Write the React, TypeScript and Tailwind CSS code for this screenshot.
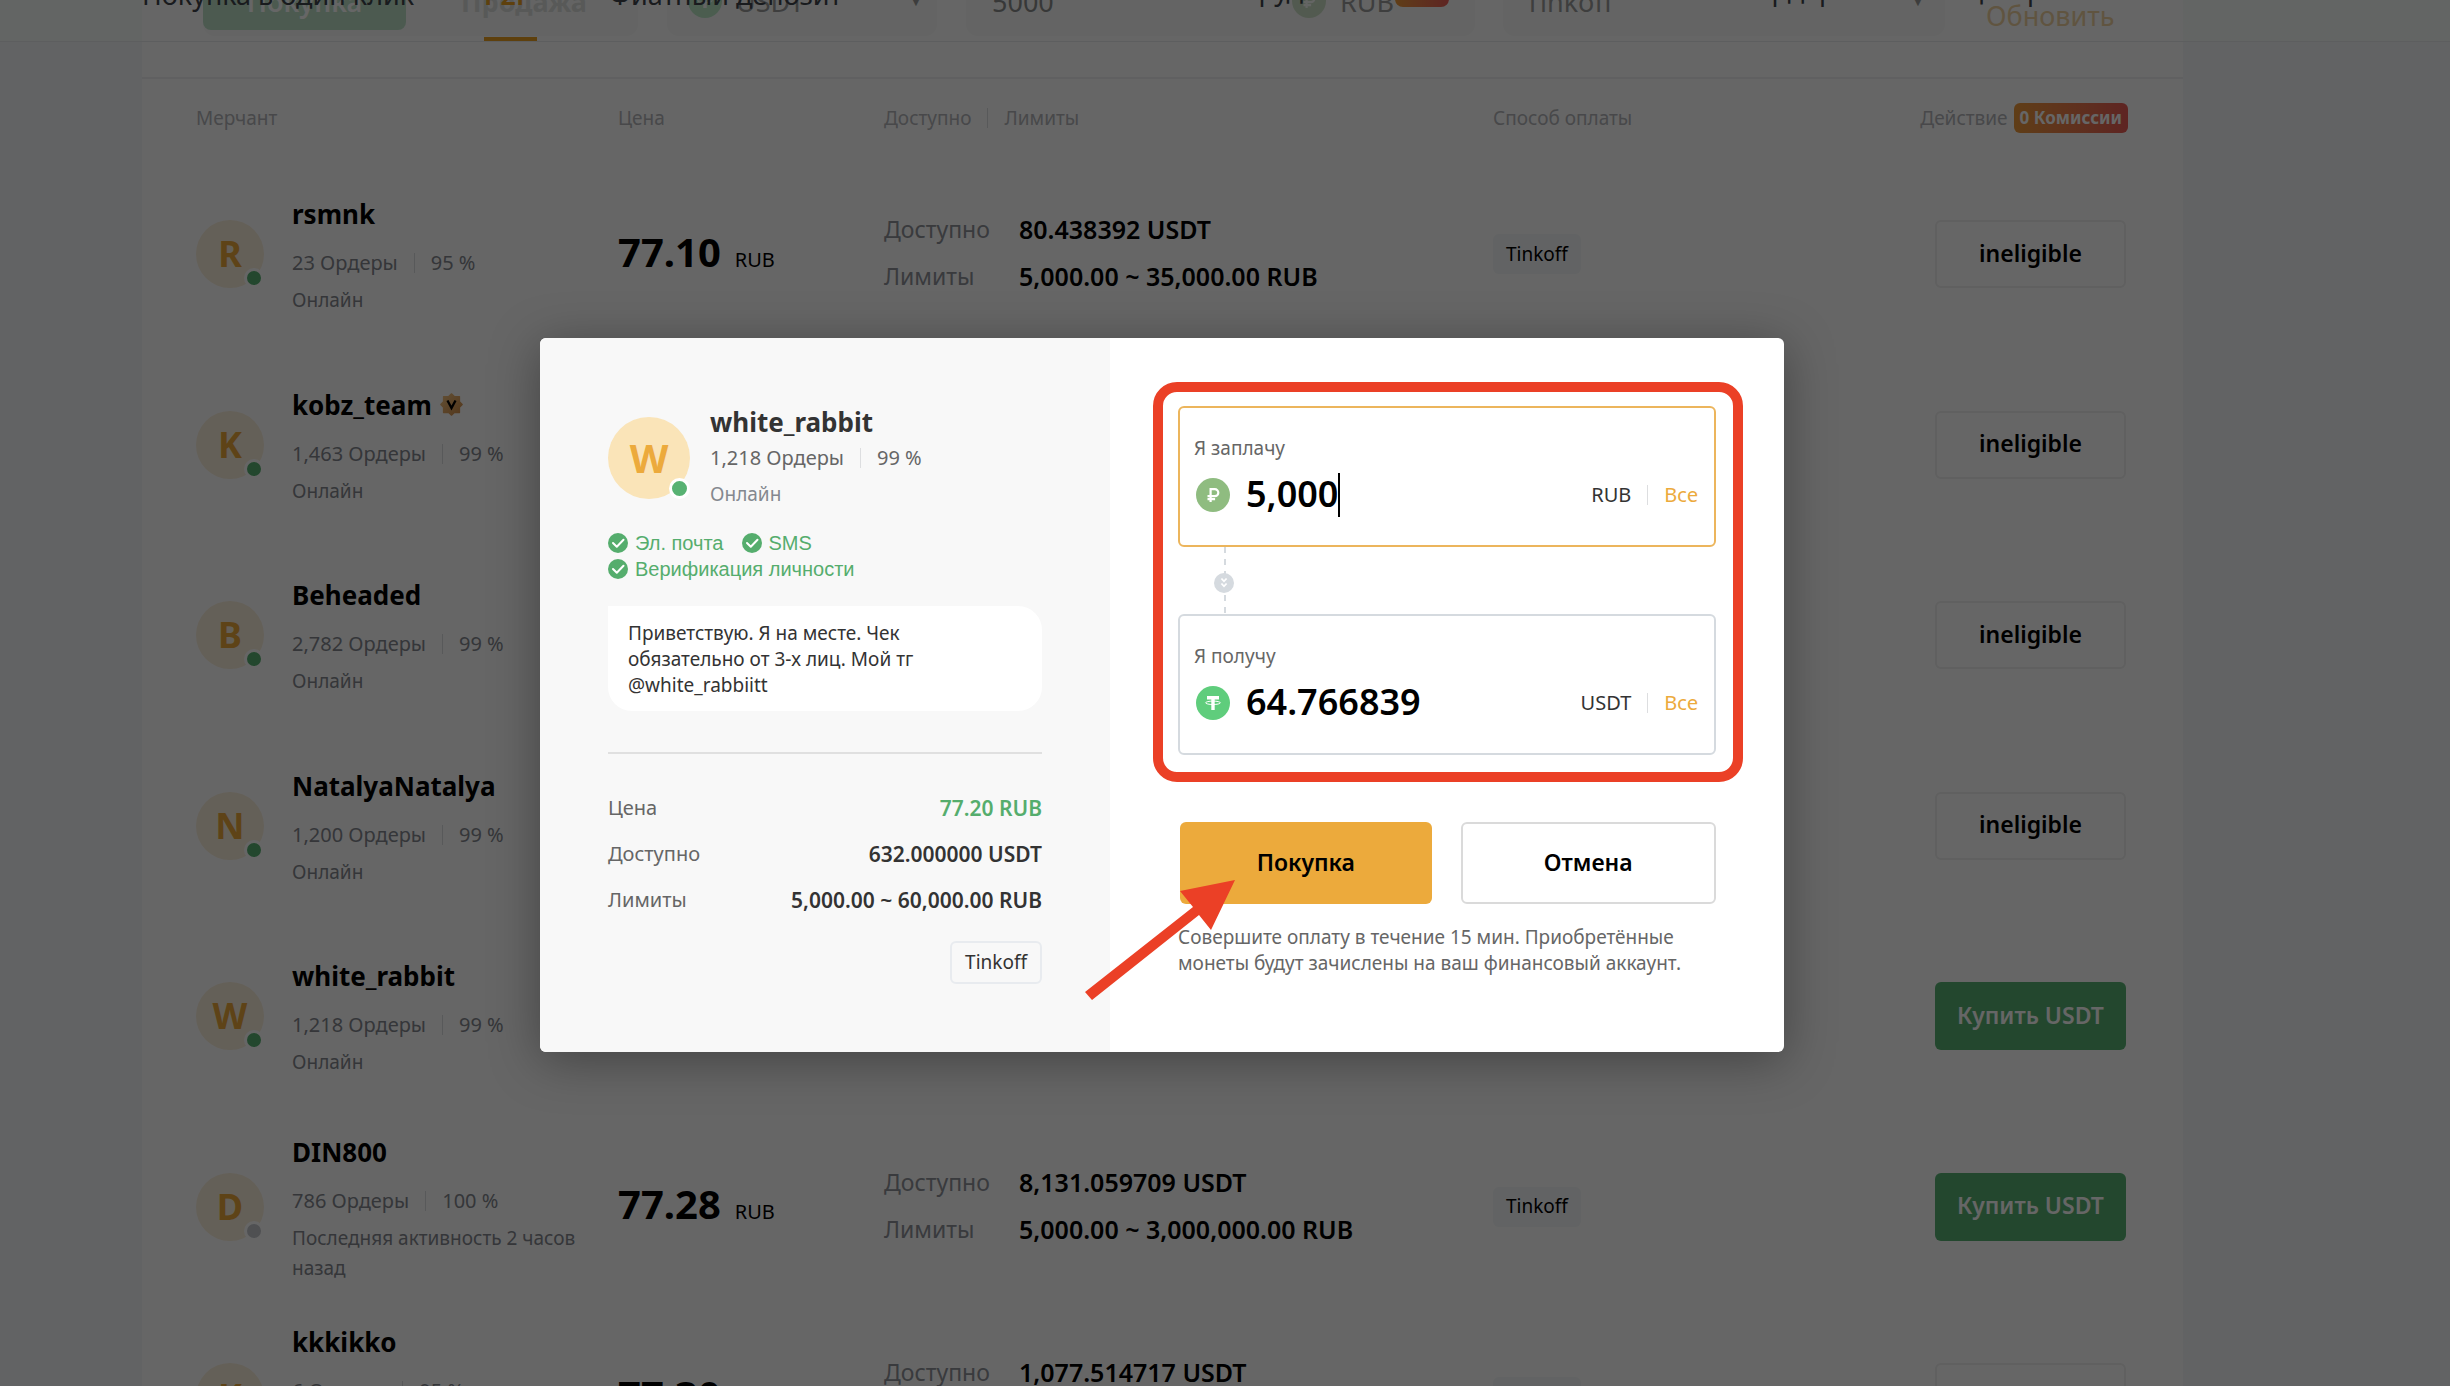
import React from "react";

type Merchant = {
  name: string;
  letter: string;
  orders: string;
  rate: string;
  status: string;
  online: boolean;
  verified?: boolean;
  price?: string;
  available?: string;
  limits?: string;
  eligible: boolean;
};

const merchants: Merchant[] = [
  { name: "rsmnk", letter: "R", orders: "23", rate: "95 %", status: "Онлайн", online: true, price: "77.10", available: "80.438392 USDT", limits: "5,000.00 ~ 35,000.00 RUB", eligible: false },
  { name: "kobz_team", letter: "K", orders: "1,463", rate: "99 %", status: "Онлайн", online: true, verified: true, eligible: false },
  { name: "Beheaded", letter: "B", orders: "2,782", rate: "99 %", status: "Онлайн", online: true, eligible: false },
  { name: "NatalyaNatalya", letter: "N", orders: "1,200", rate: "99 %", status: "Онлайн", online: true, eligible: false },
  { name: "white_rabbit", letter: "W", orders: "1,218", rate: "99 %", status: "Онлайн", online: true, eligible: true },
  { name: "DIN800", letter: "D", orders: "786", rate: "100 %", status: "Последняя активность 2 часов назад", online: false, price: "77.28", available: "8,131.059709 USDT", limits: "5,000.00 ~ 3,000,000.00 RUB", eligible: true },
  { name: "kkkikko", letter: "K", orders: "6", rate: "95 %", status: "Последняя активность 2 часов назад", online: false, price: "77.30", available: "1,077.514717 USDT", limits: "5,000.00 ~ 83,000.00 RUB", eligible: false },
];

function RubleIcon({ className }: { className: string }) {
  return (
    <svg viewBox="0 0 34 34" className={className} aria-hidden="true">
      <circle cx="17" cy="17" r="17" fill="#8fbc80" />
      <path d="M14.6 24V11.2h4.2a3.5 3.5 0 0 1 0 7h-7.3M11.5 21.2h7.6" fill="none" stroke="#fff" strokeWidth="2.2" />
    </svg>
  );
}

function TetherIcon({ className }: { className: string }) {
  return (
    <svg viewBox="0 0 34 34" className={className} aria-hidden="true">
      <circle cx="17" cy="17" r="17" fill="#5fcd7c" />
      <path d="M11 10h12v3.6h-4.3V24h-3.4V13.6H11z" fill="#fff" />
      <ellipse cx="17" cy="16.8" rx="7.4" ry="1.7" fill="none" stroke="#fff" strokeWidth="1" />
    </svg>
  );
}

function CheckIcon() {
  return (
    <svg viewBox="0 0 20 20" className="size-5 shrink-0" aria-hidden="true">
      <circle cx="10" cy="10" r="10" fill="#55ad6d" />
      <path d="M5 10l3.8 3.8 6.7-7" fill="none" stroke="#fff" strokeWidth="2" strokeLinecap="round" strokeLinejoin="round" />
    </svg>
  );
}

function VerifiedIcon() {
  return (
    <svg viewBox="0 0 24 24" className="size-[23px]" aria-hidden="true">
      <defs>
        <linearGradient id="medal" x1="0" y1="0" x2="1" y2="1">
          <stop offset="0" stopColor="#f5c583" />
          <stop offset="1" stopColor="#cf8a45" />
        </linearGradient>
      </defs>
      <path
        d="M12 0.8L15 3.6H20.4V9L23.2 12L20.4 15V20.4H15L12 23.2L9 20.4H3.6V15L0.8 12L3.6 9V3.6H9Z"
        fill="url(#medal)"
        stroke="url(#medal)"
        strokeWidth="1.2"
        strokeLinejoin="round"
      />
      <path d="M7.8 7.8L12 15.6l4.2-7.8" fill="none" stroke="#000" strokeWidth="2.4" />
    </svg>
  );
}

function Divider() {
  return <span className="mx-4 inline-block h-5 w-px bg-[#dddee0]" />;
}

function NavBar() {
  return (
    <nav className="absolute inset-x-0 top-0 h-[42px] border-b border-[#e8ebee] text-[27px] leading-8 text-[#3f444b]">
      <div className="flex h-full items-end">
        <div className="flex w-[342px] shrink-0 pb-[30px] pl-[142px] whitespace-nowrap">
          <a href="#quick">Покупка в один клик</a>
        </div>
        <div className="flex w-[267px] shrink-0 flex-col items-start pl-[142px]">
          <a href="#p2p" className="font-semibold whitespace-nowrap text-[#eba021]">P2P</a>
          <span className="mt-[26px] h-1 w-[53px] bg-[#eba021]" />
        </div>
        <div className="flex flex-1 items-end pb-[30px] whitespace-nowrap">
          <a href="#fiat" className="w-[300px] shrink-0">Фиатный депозит</a>
          <span className="w-[304px] shrink-0 text-[14px] leading-5 text-[#9a9a9a]">▼</span>
          <a href="#partners" className="w-[182px] shrink-0 pb-[5px]">Сотрудники</a>
          <span className="mb-1 h-4 w-[54px] shrink-0 rounded-lg bg-linear-to-r from-[#ee9a3a] to-[#ea5b56]" />
          <a href="#orders" className="ml-[302px] w-[160px] shrink-0 pb-[5px]">Ордера</a>
          <span className="w-[52px] shrink-0 text-[14px] leading-5 text-[#9a9a9a]">▼</span>
          <a href="#center" className="shrink-0 pb-[5px]">Центр пользователя</a>
        </div>
      </div>
    </nav>
  );
}

function FilterBar() {
  return (
    <div className="flex h-[79px] items-start border-b-2 border-[#eff0f2] pl-[61px] text-[27px] leading-8 text-[#9b9c9c]">
      <div className="flex h-9 w-[435px] shrink-0 items-start rounded-b-xl bg-[#f9fbf9]">
        <button className="flex h-[30px] w-[203px] items-end justify-center rounded-b-lg bg-[#bde2c8] pb-3 font-semibold text-white">Покупка</button>
        <button className="flex h-[30px] flex-1 items-end justify-center pb-3 pl-1 font-bold text-[#dcdedd]">Продажа</button>
      </div>
      <div className="ml-[29px] flex h-9 w-[270px] shrink-0 items-end gap-[14px] rounded-b-xl bg-[#f9fbf9] pb-[18px] pl-[21px]">
        <TetherIcon className="size-[34px] opacity-40" />
        <span>USDT</span>
      </div>
      <div className="ml-[29px] flex h-9 w-[509px] shrink-0 items-end rounded-b-xl bg-[#f9fbf9] pb-[18px] pl-[26px]">
        <span className="w-[300px] text-[#8b8c8c]">5000</span>
        <RubleIcon className="size-[34px] opacity-40" />
        <span className="ml-[14px]">RUB</span>
      </div>
      <div className="ml-7 flex h-9 w-[442px] shrink-0 items-end rounded-b-xl bg-[#f9fbf9] pb-[18px] pl-[22px]">Tinkoff</div>
      <button className="ml-[41px] text-[#f0d3a0]">Обновить</button>
    </div>
  );
}

function MerchantRow({ m }: { m: Merchant }) {
  return (
    <tr className="h-[190px] even:h-[191px]">
      <td className="pl-[54px]">
        <div className="flex items-center gap-7">
          <div className="relative flex size-[68px] shrink-0 items-center justify-center rounded-full bg-[#fbf0dc] text-[36px] leading-[66px] font-bold text-[#eca93b]">
            {m.letter}
            <span className={m.online ? "absolute right-0 bottom-0 size-5 rounded-full border-3 border-white bg-[#58b273]" : "absolute right-0 bottom-0 size-5 rounded-full border-3 border-white bg-[#c5c8ce]"} />
          </div>
          <div className="w-[300px] text-[20px] leading-[30px] text-[#84888f]">
            <div className="flex items-center gap-2 text-[26px] leading-[42px] font-bold text-black">
              {m.name}
              {m.verified && <VerifiedIcon />}
            </div>
            <div className="mt-[13px] flex items-center">
              {m.orders} Ордеры
              <Divider />
              {m.rate}
            </div>
            <div className="mt-[7px] text-[19px]">{m.status}</div>
          </div>
        </div>
      </td>
      <td>
        {m.price && (
          <div className="flex items-baseline gap-[14px] pb-[5px] text-[20px] text-black">
            <span className="text-[40px] leading-[52px] font-bold">{m.price}</span>RUB
          </div>
        )}
      </td>
      <td>
        {m.available && (
          <dl className="grid grid-cols-[135px_1fr] pb-[2px] text-[25px] leading-[47px] text-[#8e9299]">
            <dt className="text-[23px]">Доступно</dt>
            <dd className="font-semibold text-black">{m.available}</dd>
            <dt className="text-[23px]">Лимиты</dt>
            <dd className="font-semibold text-black">{m.limits}</dd>
          </dl>
        )}
      </td>
      <td>
        {m.price && <span className="inline-flex h-10 items-center rounded-md bg-[#f5f7fa] px-[13px] text-[19px] text-black">Tinkoff</span>}
      </td>
      <td className="pr-[57px]">
        <div className="flex justify-end">
          {m.eligible ? (
            <button className="h-[68px] w-[191px] rounded-md bg-[#58b273] pb-[2px] text-[23px] font-semibold whitespace-nowrap text-white">Купить USDT</button>
          ) : (
            <button className="h-[68px] w-[191px] rounded-md border-2 border-[#efefef] pb-[2px] text-[23px] font-semibold text-black">ineligible</button>
          )}
        </div>
      </td>
    </tr>
  );
}

function AmountField({ id, label, value, currency, active, icon }: { id: string; label: string; value: string; currency: string; active?: boolean; icon: React.ReactNode }) {
  return (
    <div className={active ? "h-[141px] rounded-md border-2 border-[#ecb55c] pt-[25px] pr-4 pl-[14px]" : "h-[141px] rounded-md border-2 border-[#d5dadf] pt-[25px] pr-4 pl-[14px]"}>
      <label htmlFor={id} className="block text-[19px] leading-[30px] text-[#666]">{label}</label>
      <div className="mt-[10px] flex h-11 items-center pl-[2px]">
        {icon}
        <input id={id} defaultValue={value} className="ml-4 h-11 field-sizing-content pb-[2px] text-[36px] font-semibold text-black outline-none" />
        {active && <span className="h-11 w-[2px] bg-black" />}
        <div className="ml-auto flex items-center text-[20px] text-[#333]">
          {currency}
          <Divider />
          <button className="text-[#ecaa3c]">Все</button>
        </div>
      </div>
    </div>
  );
}

function SummaryRow({ label, value, green }: { label: string; value: string; green?: boolean }) {
  return (
    <div className="flex justify-between">
      <dt className="text-[#666]">{label}</dt>
      <dd className={green ? "text-[21px] font-semibold text-[#55ad6d]" : "text-[21px] font-semibold text-[#333]"}>{value}</dd>
    </div>
  );
}

function TradeDialog() {
  return (
    <div role="dialog" aria-label="Покупка USDT" className="relative flex w-[1244px] rounded-md bg-white shadow-[0_8px_50px_rgba(0,0,0,0.35)]">
      <section className="w-[570px] shrink-0 rounded-l-md bg-[#f8f8f8] px-[68px] pt-[66px] pb-[68px] text-[20px]">
        <div className="flex items-center gap-5">
          <div className="relative flex size-[82px] shrink-0 items-center justify-center rounded-full bg-[#fae4b8] text-[40px] font-bold text-[#ecaa3c]">
            W
            <span className="absolute right-0 bottom-0 size-[21px] rounded-full border-3 border-white bg-[#58b273]" />
          </div>
          <div className="leading-9">
            <h2 className="text-[26px] font-bold text-[#333]">white_rabbit</h2>
            <div className="flex items-center text-[#666]">
              1,218 Ордеры
              <Divider />
              99 %
            </div>
            <div className="text-[19px] text-[#84888f]">Онлайн</div>
          </div>
        </div>
        <ul className="mt-[18px] flex flex-wrap gap-x-[18px] font-['Liberation_Sans',sans-serif] text-[20px] leading-[26px] text-[#55ad6d]">
          <li className="flex items-center gap-[7px]"><CheckIcon />Эл. почта</li>
          <li className="flex items-center gap-[7px]"><CheckIcon />SMS</li>
          <li className="flex basis-full items-center gap-[7px]"><CheckIcon />Верификация личности</li>
        </ul>
        <p className="mt-6 rounded-3xl rounded-tl-none bg-white pt-[14px] pr-10 pb-[13px] pl-5 text-[19px] leading-[26px] text-[#333]">
          Приветствую. Я на месте. Чек обязательно от 3-х лиц. Мой тг @white_rabbiitt
        </p>
        <hr className="mt-[41px] border-t-2 border-[#e0e0e0]" />
        <dl className="mt-[31px] leading-[46px]">
          <SummaryRow label="Цена" value="77.20 RUB" green />
          <SummaryRow label="Доступно" value="632.000000 USDT" />
          <SummaryRow label="Лимиты" value="5,000.00 ~ 60,000.00 RUB" />
        </dl>
        <div className="mt-[18px] flex justify-end">
          <span className="flex h-[43px] items-center rounded-md border-2 border-[#e8ebef] px-[13px] text-[19px] text-[#333]">Tinkoff</span>
        </div>
      </section>
      <section className="flex-1 px-[68px] pt-[68px]">
        <div className="relative">
          <AmountField id="pay" label="Я заплачу" value="5,000" currency="RUB" active icon={<RubleIcon className="size-[34px] shrink-0" />} />
          <svg viewBox="0 0 20 67" className="ml-9 block h-[67px] w-5" aria-hidden="true">
            <path d="M11 0V67" stroke="#d5dadf" strokeWidth="2" strokeDasharray="6 6" />
            <circle cx="10" cy="36" r="10" fill="#d5dadf" />
            <path d="M7.4 31.5l2.6 2.8 2.6-2.8M7.4 36.5l2.6 2.8 2.6-2.8" fill="none" stroke="#fff" strokeWidth="1.8" />
          </svg>
          <AmountField id="receive" label="Я получу" value="64.766839" currency="USDT" icon={<TetherIcon className="size-[34px] shrink-0" />} />
          <div className="pointer-events-none absolute -top-6 -right-[27px] -bottom-[27px] -left-[25px] rounded-[24px] border-[10px] border-[#eb4026]" />
        </div>
        <div className="mt-[67px] flex gap-[29px] pl-[2px]">
          <button className="h-[82px] flex-1 rounded-md bg-[#ecaa3c] pb-[2px] text-[23px] font-semibold text-black">Покупка</button>
          <button className="h-[82px] flex-1 rounded-md border-2 border-[#dadada] pb-[2px] text-[23px] font-semibold text-black">Отмена</button>
        </div>
        <p className="mt-5 text-[19px] leading-[26px] text-[#666]">
          Совершите оплату в течение 15 мин. Приобретённые монеты будут зачислены на ваш финансовый аккаунт.
        </p>
      </section>
      <svg viewBox="0 0 150 120" className="pointer-events-none absolute top-[542px] left-[545px] h-[120px] w-[150px]" aria-hidden="true">
        <path d="M150 0L95 11l13 16L0 112l7 8L114 35l12 15z" fill="#eb4026" />
      </svg>
    </div>
  );
}

export default function App() {
  return (
    <div className="relative h-screen overflow-hidden bg-[#f5f7fa] font-['Noto_Sans',sans-serif]">
      <div className="absolute inset-x-0 top-0 h-[42px] bg-[#f8fcf9]" />
      <main className="relative mr-[267px] ml-[142px] min-h-full bg-white">
        <FilterBar />
        <table className="w-full table-fixed text-left">
          <colgroup>
            <col className="w-[476px]" />
            <col className="w-[266px]" />
            <col className="w-[609px]" />
            <col />
            <col />
          </colgroup>
          <thead>
            <tr className="h-20 text-[19px] leading-[30px] text-[#b3b5b9]">
              <th className="pb-[2px] pl-[54px] font-normal">Мерчант</th>
              <th className="pb-[2px] font-normal">Цена</th>
              <th className="pb-[2px] font-normal">
                <div className="flex items-center">Доступно<Divider />Лимиты</div>
              </th>
              <th className="pb-[2px] font-normal">Способ оплаты</th>
              <th className="pr-[55px] pb-[2px] font-normal">
                <div className="flex items-center justify-end gap-[6px]">
                  Действие
                  <span className="rounded-md bg-linear-to-r from-[#ee9a3a] to-[#ea5b56] px-[6px] text-[17px] font-bold whitespace-nowrap text-white">0 Комиссии</span>
                </div>
              </th>
            </tr>
          </thead>
          <tbody>
            {merchants.map((m) => (
              <MerchantRow key={m.name} m={m} />
            ))}
          </tbody>
        </table>
      </main>
      <NavBar />
      <div className="absolute inset-0 flex items-center justify-center bg-black/60 pt-1 pr-[126px]">
        <TradeDialog />
      </div>
    </div>
  );
}
